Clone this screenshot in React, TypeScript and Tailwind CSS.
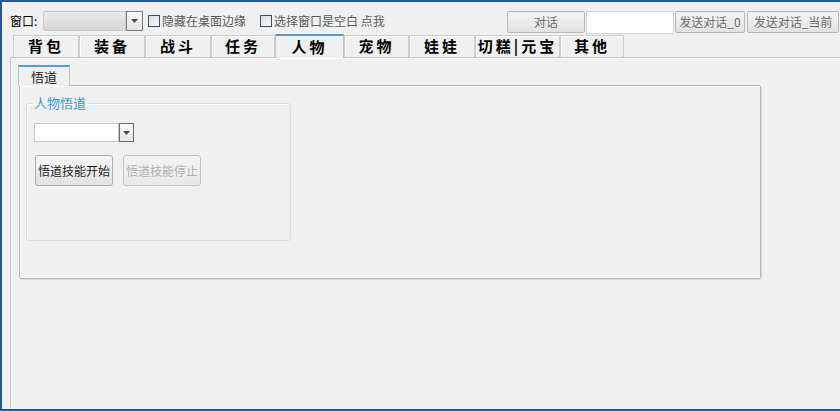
import React from "react";

const FONT = { fontFamily: '"Noto Sans CJK SC", "Noto Sans", sans-serif' };

function DropArrow() {
  return (
    <svg width="7" height="4" viewBox="0 0 7 4">
      <path d="M0 0 H7 L3.5 4 Z" fill="#4a4a4a" />
    </svg>
  );
}

function Checkbox({ label }: { label: string }) {
  return (
    <div className="flex items-center h-[20px]">
      <div className="w-[12px] h-[12px] border border-[#33507a] bg-gradient-to-br from-[#dcdcdc] to-[#fbfbfb]" />
      <span className="ml-[2px] text-[12px] leading-[20px] text-[#5a5a5a] whitespace-nowrap">{label}</span>
    </div>
  );
}

function TopButton({ label, w }: { label: string; w: string }) {
  return (
    <div
      className={`${w} h-[22px] border border-[#b9b9b9] rounded-[2px] bg-gradient-to-b from-[#f4f4f4] to-[#e2e2e2] flex items-center justify-center text-[12px] text-[#6e6e6e] whitespace-nowrap`}
    >
      {label}
    </div>
  );
}

const tabs: { label: string; w: string; selected?: boolean }[] = [
  { label: "背包", w: "w-[66px]" },
  { label: "装备", w: "w-[66px]" },
  { label: "战斗", w: "w-[66px]" },
  { label: "任务", w: "w-[64px]" },
  { label: "人物", w: "w-[69px]", selected: true },
  { label: "宠物", w: "w-[65px]" },
  { label: "娃娃", w: "w-[66px]" },
  { label: "切糕|元宝", w: "w-[85px]" },
  { label: "其他", w: "w-[64px]" },
];

export default function App() {
  return (
    <div
      style={FONT}
      className="w-[840px] h-[411px] bg-[#f0f0f0] border-t-2 border-l-2 border-b-2 border-[#2b5894] flex flex-col overflow-hidden"
    >
      {/* Top row */}
      <div className="h-[32px] flex items-start pt-[9px] pl-[8px] pr-[1px]">
        <span className="w-[33px] text-[12px] leading-[20px] text-black">窗口:</span>
        <div className="w-[100px] h-[20px] flex">
          <div className="flex-1 border border-[#cbcbcb] rounded-l-[2px] bg-gradient-to-b from-[#ececec] to-[#d6d6d6]" />
          <div className="w-[17px] h-[20px] border border-[#7a7a7a] bg-gradient-to-b from-[#fafafa] to-[#e4e4e4] flex items-center justify-center">
            <DropArrow />
          </div>
        </div>
        <div className="ml-[5px]">
          <Checkbox label="隐藏在桌面边缘" />
        </div>
        <div className="ml-[14px]">
          <Checkbox label="选择窗口是空白 点我" />
        </div>
        <div className="ml-auto flex">
          <TopButton label="对话" w="w-[78px]" />
          <div className="ml-[1px] w-[88px] h-[23px] border border-[#d4d4d4] bg-white" />
          <div className="ml-[1px]">
            <TopButton label="发送对话_0" w="w-[70px]" />
          </div>
          <div className="ml-[2px]">
            <TopButton label="发送对话_当前" w="w-[92px]" />
          </div>
        </div>
      </div>

      {/* Outer tab control */}
      <div className="flex-1 flex flex-col ml-[8px]">
        <div className="h-[23px] flex items-end pl-[3px]">
          {tabs.map((t) =>
            t.selected ? (
              <div
                key={t.label}
                className={`${t.w} h-[24px] -mb-[1px] relative z-10 bg-[#f0f0f0] border-t-2 border-t-[#5c9bcf] border-l border-r border-[#c4c4c4] flex items-center justify-center text-[15px] font-bold tracking-[3px] text-black whitespace-nowrap`}
              >
                {t.label}
              </div>
            ) : (
              <div
                key={t.label}
                className={`${t.w} h-[22px] bg-[#f0f0f0] border border-b-0 border-[#cdcdcd] shadow-[inset_1px_1px_0_#ffffff] flex items-center justify-center text-[15px] font-bold tracking-[3px] text-black whitespace-nowrap`}
              >
                {t.label}
              </div>
            )
          )}
        </div>
        <div className="flex-1 border-l border-t border-[#c4c4c4] shadow-[inset_1px_1px_0_#ffffff] pl-[7px] pt-[7px] flex flex-col items-start">
          {/* Inner tab strip */}
          <div className="w-[52px] h-[21px] border-t-2 border-t-[#5c9bcf] border-l border-r border-[#c4c4c4] bg-[#f0f0f0] flex items-center justify-center text-[13px] text-[#222] -mb-[1px] relative z-10">
            悟道
          </div>
          {/* Inner panel */}
          <div className="ml-[1px] w-[742px] h-[194px] border border-[#b8b8b8] rounded-[2px] shadow-[1px_1px_1px_#d8d8d8,inset_1px_1px_0_#ffffff] pt-[10px] pl-[6px]">
            <fieldset className="w-[265px] h-[145px] border border-[#d8dde0] rounded-[3px] shadow-[inset_1px_1px_0_#ffffff] px-[7px]">
              <legend className="-ml-[1px] px-[1px] text-[13px] leading-[14px] text-[#3a9ad8]">人物悟道</legend>
              <div className="mt-[13px] w-[100px] h-[19px] flex">
                <div className="flex-1 border border-[#c9c9c9] bg-white" />
                <div className="w-[15px] h-[19px] border border-[#6d6d6d] bg-gradient-to-b from-[#fafafa] to-[#e6e6e6] flex items-center justify-center">
                  <DropArrow />
                </div>
              </div>
              <div className="mt-[13px] flex gap-[10px] pl-[1px]">
                <div className="w-[78px] h-[31px] border border-[#acacac] rounded-[3px] bg-gradient-to-b from-[#f6f6f6] to-[#e2e2e2] flex items-center justify-center text-[12px] text-[#1e1e1e] whitespace-nowrap">
                  悟道技能开始
                </div>
                <div className="w-[78px] h-[31px] border border-[#c4c4c4] rounded-[3px] bg-gradient-to-b from-[#f4f4f4] to-[#e8e8e8] flex items-center justify-center text-[12px] text-[#b0b0b0] whitespace-nowrap">
                  悟道技能停止
                </div>
              </div>
            </fieldset>
          </div>
        </div>
      </div>
    </div>
  );
}
